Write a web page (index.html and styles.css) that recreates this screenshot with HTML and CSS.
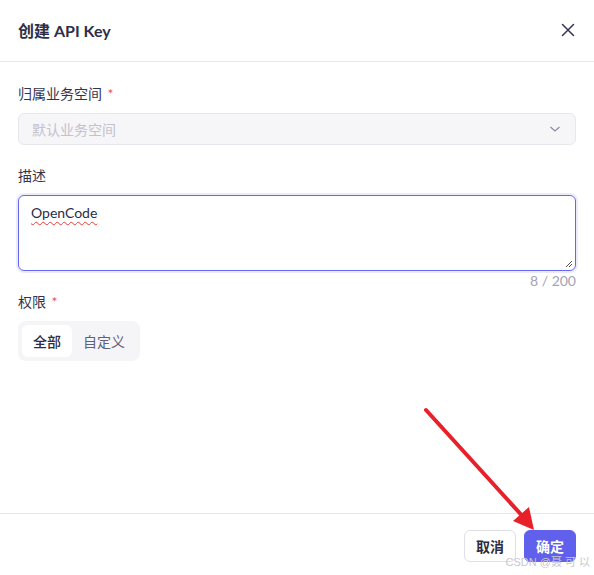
FILE: index.html
```html
<!DOCTYPE html>
<html lang="zh">
<head>
<meta charset="utf-8">
<title>创建 API Key</title>
<link rel="stylesheet" href="styles.css">
</head>
<body>
<div class="dialog">
  <header class="dlg-header">
    <h1 class="dlg-title">创建 API Key</h1>
    <button class="close-btn" aria-label="关闭">
      <svg width="14" height="14" viewBox="0 0 14 14"><path d="M1.5 1.5 L12.5 12.5 M12.5 1.5 L1.5 12.5" stroke="#35355a" stroke-width="1.5" stroke-linecap="round"/></svg>
    </button>
  </header>
  <main class="dlg-body">
    <div class="field">
      <label class="label">归属业务空间 <span class="req">*</span></label>
      <div class="select">
        <span class="placeholder">默认业务空间</span>
        <svg class="chev" width="12" height="8" viewBox="0 0 12 8"><path d="M1.5 2 L6 6 L10.5 2" fill="none" stroke="#8a8aa0" stroke-width="1.2"/></svg>
      </div>
    </div>
    <div class="field">
      <label class="label">描述</label>
      <div class="textarea">
        <span class="typed">OpenCode</span>
        <svg class="grip" width="8" height="8" viewBox="0 0 8 8"><path d="M7 1 L1 7 M7 4 L4 7" stroke="#555" stroke-width="1"/></svg>
      </div>
      <div class="counter">8 / 200</div>
    </div>
    <div class="field">
      <label class="label">权限 <span class="req">*</span></label>
      <div class="segmented">
        <span class="seg active">全部</span>
        <span class="seg">自定义</span>
      </div>
    </div>
  </main>
  <footer class="dlg-footer">
    <button class="btn btn-default">取消</button>
    <button class="btn btn-primary">确定</button>
  </footer>
</div>
<svg class="arrow" width="594" height="575" viewBox="0 0 594 575">
  <line x1="426" y1="410" x2="526" y2="520" stroke="#e8202a" stroke-width="4" stroke-linecap="round"/>
  <polygon points="534,530 513,521 529,507" fill="#e8202a"/>
</svg>
<div class="watermark">CSDN @聂 可 以</div>
</body>
</html>
```

FILE: styles.css
```css
html, body {
  margin: 0;
  padding: 0;
  height: 100%;
  background: #ffffff;
}
body {
  font-family: "Lato", "Noto Sans CJK SC", sans-serif;
  color: #34344a;
  position: relative;
  overflow: hidden;
}
.dialog {
  height: 575px;
  display: flex;
  flex-direction: column;
}
.dlg-header {
  height: 62px;
  box-sizing: border-box;
  border-bottom: 1px solid #e6e6ee;
  display: flex;
  align-items: center;
  justify-content: space-between;
  padding: 0 19px 1px 18px;
}
.dlg-title {
  margin: 0;
  font-size: 16px;
  font-weight: 700;
  color: #2e2e48;
}
.close-btn {
  border: none;
  background: none;
  padding: 0;
  width: 14px;
  height: 14px;
  display: flex;
}
.dlg-body {
  flex: 1;
  padding: 22px 18px 0 18px;
  display: flex;
  flex-direction: column;
}
.field {
  display: flex;
  flex-direction: column;
}
.field + .field {
  margin-top: 21px;
}
.field:last-child {
  margin-top: 1px;
}
.label {
  font-size: 14px;
  line-height: 20px;
  color: #34344a;
  margin-bottom: 9px;
}
.req {
  color: #f0505a;
  margin-left: 2px;
}
.select {
  height: 32px;
  box-sizing: border-box;
  border: 1px solid #e7e7ee;
  border-radius: 6px;
  background: #f6f6f9;
  display: flex;
  align-items: center;
  justify-content: space-between;
  padding: 0 14px 0 13px;
}
.placeholder {
  font-size: 14px;
  color: #c2c2cc;
}
.textarea {
  height: 76px;
  box-sizing: border-box;
  border: 1px solid #6366f1;
  border-radius: 6px;
  box-shadow: 0 0 0 2px rgba(99, 102, 241, 0.12);
  padding: 6px 12px;
  position: relative;
}
.typed {
  font-size: 14px;
  line-height: 20px;
  color: #2c2c44;
  text-decoration: underline wavy #e83a3a;
  text-decoration-thickness: 1px;
  text-underline-offset: 3px;
}
.grip {
  position: absolute;
  right: 2px;
  bottom: 2px;
}
.counter {
  align-self: flex-end;
  font-size: 14px;
  line-height: 20px;
  color: #a4a4b4;
}
.segmented {
  align-self: flex-start;
  display: flex;
  background: #f5f5f8;
  border-radius: 8px;
  padding: 4px;
}
.seg {
  height: 32px;
  padding: 0 11px;
  display: flex;
  align-items: center;
  font-size: 14px;
  color: #60607a;
  border-radius: 6px;
}
.seg.active {
  background: #ffffff;
  color: #2c2c44;
  font-weight: 500;
}
.dlg-footer {
  border-top: 1px solid #e6e6ee;
  height: 62px;
  box-sizing: border-box;
  display: flex;
  justify-content: flex-end;
  align-items: flex-start;
  gap: 8px;
  padding: 16px 18px 0 0;
}
.btn {
  height: 32px;
  width: 52px;
  box-sizing: border-box;
  border-radius: 6px;
  font-family: "Lato", "Noto Sans CJK SC", sans-serif;
  font-size: 14px;
  font-weight: 600;
  padding: 0;
}
.btn-default {
  background: #ffffff;
  border: 1px solid #dfdfe7;
  color: #2c2c44;
}
.btn-primary {
  background: #6160ec;
  border: 1px solid #6160ec;
  color: #ffffff;
}
.arrow {
  position: absolute;
  left: 0;
  top: 0;
  pointer-events: none;
}
.watermark {
  position: absolute;
  right: 4px;
  bottom: 6px;
  font-family: "Liberation Sans", "Noto Sans CJK SC", sans-serif;
  font-size: 11px;
  color: #c8c8d0;
}
```
